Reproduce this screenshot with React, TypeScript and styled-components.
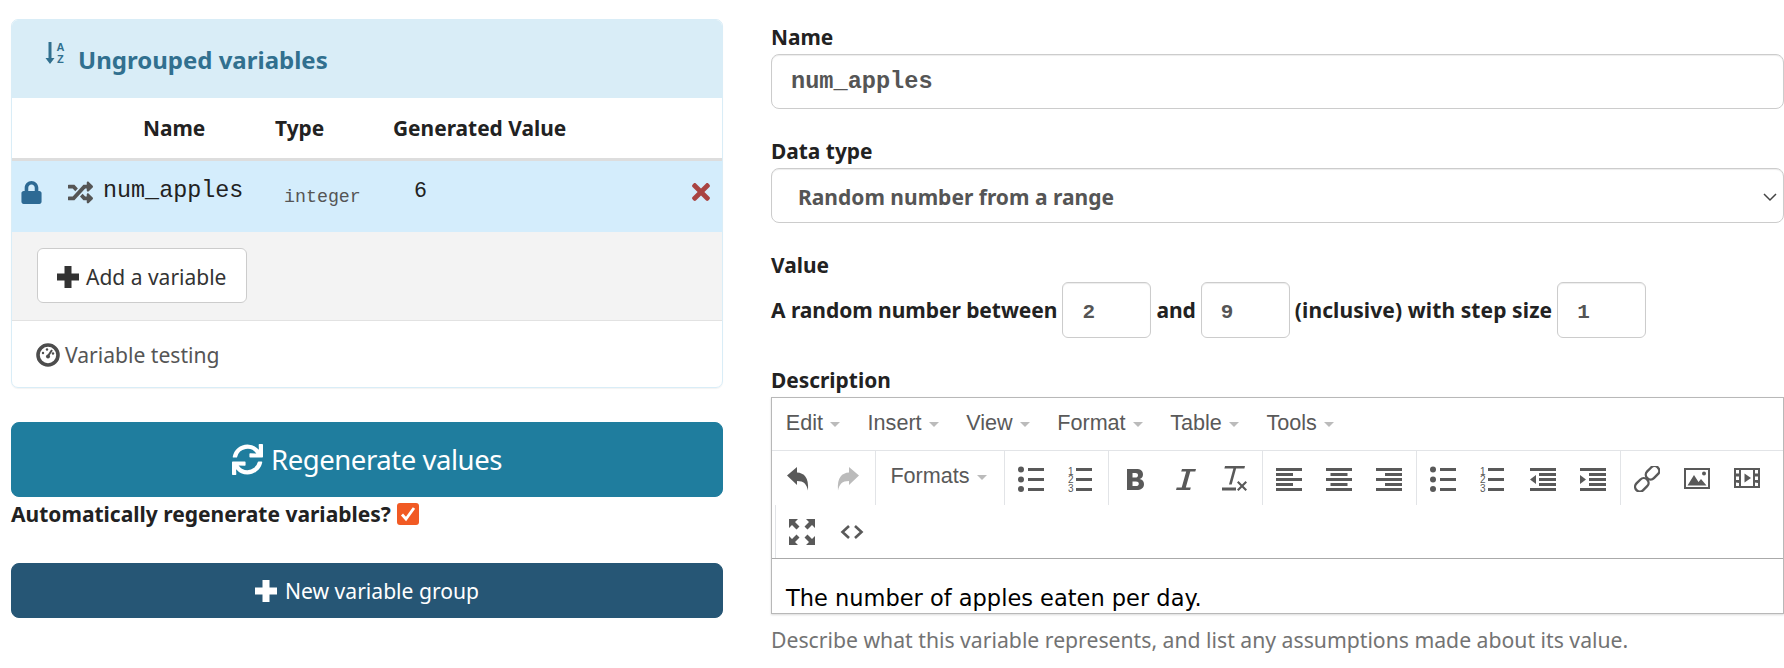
import React from "react";
import styled, { createGlobalStyle } from "styled-components";
import { FaLock, FaRandom, FaSync, FaTimes } from "react-icons/fa";

const sans = `"Noto Sans", "Open Sans", Arial, sans-serif`;
const mono = `"Liberation Mono", "Courier New", monospace`;
const tiny = `"Liberation Sans", Arial, sans-serif`;

const GlobalStyle = createGlobalStyle`
  html, body { margin: 0; padding: 0; background: #fff; overflow: hidden; }
  body { font-family: ${sans}; font-size: 21px; color: #222; }
  * { box-sizing: border-box; }
`;

const Page = styled.div`
  display: grid;
  grid-template-columns: 712px 1013px;
  column-gap: 48px;
  padding-left: 11px;
  width: 1784px;
  height: 668px;
  overflow: hidden;
`;

const LeftColumn = styled.div`
  display: flex;
  flex-direction: column;
  padding-top: 19px;
`;

const Panel = styled.div`
  border: 1px solid #d9edf7;
  border-radius: 7px;
  height: 369px;
  box-shadow: 0 1px 1px rgba(0, 0, 0, 0.05);
  overflow: hidden;
`;

const PanelHeader = styled.div`
  height: 78px;
  background: #d9edf7;
  color: #31708f;
  display: flex;
  align-items: center;
  padding-left: 33px;
  gap: 13px;
  font-weight: 700;
  font-size: 24px;
`;

const VarRow = styled.div<{ $head?: boolean }>`
  display: grid;
  grid-template-columns: 56px 207px 118px 1fr 44px;
  height: ${(p) => (p.$head ? "63px" : "71px")};
  background: ${(p) => (p.$head ? "#fff" : "#d4edfc")};
  border-bottom: ${(p) => (p.$head ? "3px solid #ddd" : "none")};
`;

const HeadCell = styled.div<{ $pad?: number }>`
  padding: 16px 0 0 ${(p) => p.$pad ?? 0}px;
  font-weight: 700;
  font-size: 20.9px;
  white-space: nowrap;
`;

const LockCell = styled.div`
  display: flex;
  align-items: center;
  padding: 0 0 9px 8px;
  color: #2d6a94;
  font-size: 23px;
`;

const RemoveCell = styled.div`
  display: flex;
  align-items: center;
  justify-content: center;
  padding: 0 0 9px 2px;
  color: #a94442;
  font-size: 26px;
`;

const NameCell = styled.div`
  display: flex;
  align-items: center;
  gap: 10px;
  font-family: ${mono};
  font-size: 23.4px;
  color: #222;
  padding-bottom: 11px;
  svg { color: #555; font-size: 25px; margin-top: 3px; }
`;

const TypeCell = styled.div`
  font-family: ${mono};
  font-size: 18.3px;
  color: #555;
  padding: 26px 0 0 9px;
`;

const ValueCell = styled.div`
  font-family: ${mono};
  font-size: 21.6px;
  color: #222;
  padding: 18px 0 0 21px;
`;

const PanelFooter = styled.div`
  height: 89px;
  background: #f3f3f3;
  border-bottom: 1px solid #e2e2e2;
  padding: 16px 25px;
`;

const AddButton = styled.button`
  display: flex;
  align-items: center;
  gap: 7px;
  width: 210px;
  height: 55px;
  padding: 2px 0 0 19px;
  background: #fff;
  border: 1px solid #ccc;
  border-radius: 6px;
  color: #333;
  font-family: ${sans};
  font-size: 21px;
`;

const TestingLink = styled.div`
  display: flex;
  align-items: center;
  gap: 5px;
  height: 65px;
  padding: 2px 0 0 24px;
  color: #555;
  font-size: 21.1px;
`;

const BigButton = styled.button<{ $bg: string; $large?: boolean }>`
  display: flex;
  align-items: center;
  justify-content: center;
  gap: 8px;
  width: 100%;
  height: ${(p) => (p.$large ? "75px" : "55px")};
  background: ${(p) => p.$bg};
  border: 1px solid ${(p) => p.$bg};
  border-radius: 8px;
  color: #fff;
  font-family: ${sans};
  font-size: ${(p) => (p.$large ? "27.5px" : "21.1px")};
  letter-spacing: ${(p) => (p.$large ? "-0.45px" : "0")};
`;

const RegenerateButton = styled(BigButton)`
  margin-top: 34px;
`;

const AutoRow = styled.div`
  display: flex;
  align-items: center;
  gap: 6px;
  height: 34px;
  font-weight: 700;
  font-size: 21px;
  white-space: nowrap;
`;

const CheckBox = styled.span`
  display: inline-flex;
  align-items: center;
  justify-content: center;
  width: 22px;
  height: 22px;
  background: #f15a24;
  border-radius: 3px;
`;

const NewGroupButton = styled(BigButton)`
  margin-top: 32px;
`;

const RightColumn = styled.div`
  padding-top: 24px;
`;

const Field = styled.div`
  margin-bottom: 29px;
`;

const Label = styled.div`
  height: 30px;
  line-height: 26px;
  font-weight: 700;
  font-size: 20.9px;
`;

const TextInput = styled.input`
  display: block;
  width: 100%;
  height: 55px;
  padding: 0 19px;
  border: 1px solid #ccc;
  border-radius: 8px;
  box-shadow: inset 0 1px 1px rgba(0, 0, 0, 0.075);
  color: #555;
  font-family: ${mono};
  font-weight: 700;
  font-size: 23.6px;
  outline: none;
`;

const SelectBox = styled.div`
  position: relative;
`;

const Select = styled.select`
  display: block;
  width: 100%;
  height: 55px;
  padding: 2px 26px 0;
  appearance: none;
  background: #fff;
  border: 1px solid #ccc;
  border-radius: 8px;
  box-shadow: inset 0 1px 1px rgba(0, 0, 0, 0.075);
  color: #555;
  font-family: ${sans};
  font-weight: 700;
  font-size: 21px;
`;

const Chevron = styled.svg`
  position: absolute;
  right: 7px;
  top: 25px;
  pointer-events: none;
`;

const RangeRow = styled.div`
  display: flex;
  align-items: center;
  gap: 5px;
  height: 56px;
  font-weight: 700;
  font-size: 21px;
  letter-spacing: -0.05px;
  white-space: nowrap;
`;

const RangeSuffix = styled.span`
  letter-spacing: 0.1px;
`;

const NumberInput = styled.input`
  width: 89px;
  height: 56px;
  padding: 4px 0 0 19px;
  border: 1px solid #ccc;
  border-radius: 6px;
  box-shadow: inset 0 1px 1px rgba(0, 0, 0, 0.075);
  color: #555;
  font-family: ${mono};
  font-weight: 700;
  font-size: 21px;
  outline: none;
`;

const Editor = styled.div`
  height: 217px;
  border: 1px solid #b8b8b8;
  box-shadow: 0 1px 2px rgba(0, 0, 0, 0.15);
  overflow: hidden;
`;

const MenuBar = styled.div`
  display: flex;
  align-items: center;
  height: 53px;
  padding: 0 0 2px 0;
  border-bottom: 1px solid #e2e4e7;
`;

const MenuItem = styled.div`
  display: flex;
  align-items: center;
  gap: 7px;
  padding: 0 13.8px;
  color: #595959;
  font-family: ${tiny};
  font-size: 21.6px;
`;

const Caret = styled.span`
  width: 0;
  height: 0;
  margin-top: 3px;
  border-left: 5.5px solid transparent;
  border-right: 5.5px solid transparent;
  border-top: 5.5px solid #bbb;
`;

const ToolRow = styled.div<{ $inset?: boolean }>`
  display: flex;
  height: 54px;
  padding-left: ${(p) => (p.$inset ? "3px" : "0")};
  border-bottom: ${(p) => (p.$inset ? "1px solid #aaa" : "none")};
`;

const ToolGroup = styled.div<{ $first?: boolean }>`
  display: flex;
  align-items: center;
  padding: 1px 2px 0 1px;
  border-left: ${(p) => (p.$first ? "none" : "1px solid #e2e4e7")};
`;

const ToolButton = styled.div`
  display: flex;
  align-items: center;
  justify-content: center;
  width: 50px;
`;

const FormatsButton = styled.div`
  display: flex;
  align-items: center;
  justify-content: center;
  gap: 7px;
  width: 125px;
  padding: 0 2px 5px 0;
  color: #595959;
  font-family: ${tiny};
  font-size: 21.6px;
`;

const EditorBody = styled.div`
  padding: 24px 14px;
  font-family: "DejaVu Sans", Verdana, sans-serif;
  font-size: 22.5px;
  line-height: 30px;
  color: #000;
`;

const HelpText = styled.div`
  margin-top: 11px;
  color: #737373;
  font-size: 21.2px;
  white-space: nowrap;
`;

const Svg = styled.svg`
  display: block;
  flex: none;
`;

const Icon = ({ children, w = 26, h = 26 }: { children: React.ReactNode; w?: number; h?: number }) => (
  <Svg width={w} height={h} viewBox={`0 0 ${w} ${h}`} fill="#595959">
    {children}
  </Svg>
);

const SortIcon = () => (
  <Svg width={20} height={24} viewBox="0 0 20 24" fill="#31708f" style={{ marginTop: -12 }}>
    <path d="M3.5 1h3v16h3L5 23 .5 17h3z" />
    <text x="11.500" y="10" fontFamily={tiny} fontWeight="700" fontSize="11">A</text>
    <text x="12" y="21.500" fontFamily={tiny} fontWeight="700" fontSize="11">Z</text>
  </Svg>
);

const PlusIcon = ({ color, size }: { color: string; size: number }) => (
  <Svg width={size} height={size} viewBox="0 0 22 22" fill={color}>
    <path d="M7.5 0h7v7.5H22v7h-7.5V22h-7v-7.5H0v-7h7.5z" />
  </Svg>
);

const GaugeIcon = () => (
  <Svg width={24} height={24} viewBox="0 0 24 24">
    <circle cx="12" cy="12" r="10" fill="#fff" stroke="#4d4d4d" strokeWidth="3.6" />
    <path d="M12 13l4-6" stroke="#4d4d4d" strokeWidth="2" />
    <circle cx="12" cy="13.500" r="2" fill="#4d4d4d" />
    <circle cx="7" cy="10" r="1.200" fill="#4d4d4d" />
    <circle cx="11" cy="6.500" r="1.200" fill="#4d4d4d" />
    <circle cx="17" cy="10.500" r="1.200" fill="#4d4d4d" />
  </Svg>
);

const UndoIcon = ({ muted, flip }: { muted?: boolean; flip?: boolean }) => (
  <Svg width={26} height={26} viewBox="0 0 26 26" fill={muted ? "#bbb" : "#595959"}
    style={flip ? { transform: "scaleX(-1)" } : undefined}>
    <path d="M2 9.500 12 1v5.500c7 .5 12 4.500 11 18-1.500-6.500-4-9.500-11-9.500v4z" />
  </Svg>
);

const Lines = ({ rows }: { rows: [number, number, number][] }) => (
  <>
    {rows.map(([x, y, w]) => (
      <rect key={`${x}-${y}`} x={x} y={y} width={w} height={3} />
    ))}
  </>
);

const BulletIcon = () => (
  <Icon>
    <circle cx="3" cy="3.500" r="3" />
    <circle cx="3" cy="13.500" r="3" />
    <circle cx="3" cy="23" r="3" />
    <Lines rows={[[10, 2, 16], [10, 12, 16], [10, 22, 16]]} />
  </Icon>
);

const NumberIcon = () => (
  <Icon>
    <text x="0" y="8.500" fontFamily={tiny} fontSize="10">1</text>
    <text x="0" y="17" fontFamily={tiny} fontSize="10">2</text>
    <text x="0" y="25.500" fontFamily={tiny} fontSize="10">3</text>
    <Lines rows={[[8, 2, 16], [8, 12, 16], [8, 22, 16]]} />
  </Icon>
);

const AlignIcon = ({ offset }: { offset: number }) => (
  <Icon>
    <Lines rows={[[0, 2, 26], [offset, 7, 17], [0, 12, 26], [offset, 17, 17], [0, 22, 26]]} />
  </Icon>
);

const IndentIcon = ({ out }: { out?: boolean }) => (
  <Icon>
    <Lines rows={[[0, 2, 26], [9, 7, 17], [9, 12, 17], [9, 17, 17], [0, 22, 26]]} />
    <path d={out ? "M6 9v9l-6-4.500z" : "M0 9v9l6-4.500z"} />
  </Icon>
);

const BoldIcon = () => (
  <Icon>
    <path fillRule="evenodd" d="M5 3h9c5 0 7 2 7 5.500 0 2.500-1.500 4-3.500 4.500 2.500.5 4.500 2 4.500 5 0 4-3 6-7.500 6H5zm5.500 4v4.500h3c1.500 0 2.500-.8 2.500-2.300S15 7 13.500 7zm0 8.500V20h3.500c1.700 0 2.800-.8 2.800-2.300s-1.100-2.200-2.800-2.200z" />
  </Icon>
);

const ItalicIcon = () => (
  <Icon>
    <path d="M10 3h14l-.7 2.500h-5l-4.500 16h5l-.7 2.500H4l.7-2.500h5l4.500-16h-5z" />
  </Icon>
);

const ClearIcon = () => (
  <Icon>
    <path d="M3 0h20l-.6 2.500h-8.300l-4.400 16H7l4.400-16H2.400z" />
    <rect x="0" y="21.500" width="14" height="3" />
    <path d="M16.500 15l3.500 3.500 3.500-3.500 1.500 1.500-3.500 3.500 3.500 3.500-1.500 1.500-3.500-3.500-3.500 3.500-1.500-1.500 3.500-3.500-3.500-3.500z" />
  </Icon>
);

const LinkIcon = () => (
  <Icon>
    <g fill="none" stroke="#595959" strokeWidth="2.400">
      <rect x="13.500" y="-1" width="9.500" height="15" rx="4.700" transform="rotate(45 18 7)" />
      <rect x="3" y="11.500" width="9.500" height="15" rx="4.700" transform="rotate(45 8 19)" />
    </g>
  </Icon>
);

const ImageIcon = () => (
  <Icon>
    <path fillRule="evenodd" d="M0 2h26v21H0zm2 2v17h22V4z" />
    <path d="M3.500 19.500 10 9l4.500 7 2.500-3 5.500 6.500z" />
    <circle cx="20" cy="7.500" r="2" />
  </Icon>
);

const MediaIcon = () => (
  <Icon>
    <path fillRule="evenodd" d="M0 2h26v20H0zm2 2v3.500h3V4zm0 6.500v3.500h3v-3.500zm0 6v3.500h3V17zM21 4v3.500h3V4zm0 6.500v3.500h3v-3.500zm0 6v3.500h3V17zM7 4v16h12V4z" />
    <path d="M10.500 7.500 17 12l-6.500 4.500z" />
  </Icon>
);

const FullscreenIcon = () => (
  <Icon>
    <path d="M0 0h9l-3 3 4.500 4.500-3 3L3 6 0 9zM26 0v9l-3-3-4.500 4.500-3-3L20 3l-3-3zM0 26v-9l3 3 4.500-4.500 3 3L6 23l3 3zM26 26h-9l3-3-4.500-4.500 3-3L23 20l3-3z" />
  </Icon>
);

const CodeIcon = () => (
  <Svg width={24} height={16} viewBox="0 0 24 16" fill="none" stroke="#595959" strokeWidth="2.600">
    <path d="M9 2 2.500 8 9 14M15 2l6.500 6-6.500 6" />
  </Svg>
);

const MENU_ITEMS = ["Edit", "Insert", "View", "Format", "Table", "Tools"];

export default function App() {
  return (
    <>
      <GlobalStyle />
      <Page>
        <LeftColumn>
          <Panel>
            <PanelHeader>
              <SortIcon />
              Ungrouped variables
            </PanelHeader>
            <VarRow $head>
              <div />
              <HeadCell $pad={75}>Name</HeadCell>
              <HeadCell>Type</HeadCell>
              <HeadCell>Generated Value</HeadCell>
              <div />
            </VarRow>
            <VarRow>
              <LockCell><FaLock /></LockCell>
              <NameCell><FaRandom />num_apples</NameCell>
              <TypeCell>integer</TypeCell>
              <ValueCell>6</ValueCell>
              <RemoveCell><FaTimes /></RemoveCell>
            </VarRow>
            <PanelFooter>
              <AddButton>
                <PlusIcon color="#333" size={22} />
                Add a variable
              </AddButton>
            </PanelFooter>
            <TestingLink>
              <GaugeIcon />
              Variable testing
            </TestingLink>
          </Panel>
          <RegenerateButton $bg="#1f7d9e" $large>
            <FaSync size={31} />
            Regenerate values
          </RegenerateButton>
          <AutoRow>
            Automatically regenerate variables?
            <CheckBox>
              <svg width="16" height="16" viewBox="0 0 16 16" fill="none" stroke="#fff" strokeWidth="2.800">
                <path d="M2 8.500 6 13l8-11" />
              </svg>
            </CheckBox>
          </AutoRow>
          <NewGroupButton $bg="#265675">
            <PlusIcon color="#fff" size={22} />
            New variable group
          </NewGroupButton>
        </LeftColumn>

        <RightColumn>
          <Field>
            <Label>Name</Label>
            <TextInput readOnly value="num_apples" />
          </Field>
          <Field>
            <Label>Data type</Label>
            <SelectBox>
              <Select defaultValue="range">
                <option value="range">Random number from a range</option>
              </Select>
              <Chevron width="14" height="9" viewBox="0 0 14 9" fill="none" stroke="#444" strokeWidth="1.500">
                <path d="M1 1l6 6 6-6" />
              </Chevron>
            </SelectBox>
          </Field>
          <Field>
            <Label>Value</Label>
            <RangeRow>
              A random number between
              <NumberInput readOnly value="2" />
              and
              <NumberInput readOnly value="9" />
              <RangeSuffix>(inclusive) with step size</RangeSuffix>
              <NumberInput readOnly value="1" />
            </RangeRow>
          </Field>
          <Label>Description</Label>
          <Editor>
            <MenuBar>
              {MENU_ITEMS.map((item) => (
                <MenuItem key={item}>
                  {item}
                  <Caret />
                </MenuItem>
              ))}
            </MenuBar>
            <ToolRow>
              <ToolGroup $first>
                <ToolButton><UndoIcon /></ToolButton>
                <ToolButton><UndoIcon muted flip /></ToolButton>
              </ToolGroup>
              <ToolGroup>
                <FormatsButton>Formats<Caret /></FormatsButton>
              </ToolGroup>
              <ToolGroup>
                <ToolButton><BulletIcon /></ToolButton>
                <ToolButton><NumberIcon /></ToolButton>
              </ToolGroup>
              <ToolGroup>
                <ToolButton><BoldIcon /></ToolButton>
                <ToolButton><ItalicIcon /></ToolButton>
                <ToolButton><ClearIcon /></ToolButton>
              </ToolGroup>
              <ToolGroup>
                <ToolButton><AlignIcon offset={0} /></ToolButton>
                <ToolButton><AlignIcon offset={4.5} /></ToolButton>
                <ToolButton><AlignIcon offset={9} /></ToolButton>
              </ToolGroup>
              <ToolGroup>
                <ToolButton><BulletIcon /></ToolButton>
                <ToolButton><NumberIcon /></ToolButton>
                <ToolButton><IndentIcon out /></ToolButton>
                <ToolButton><IndentIcon /></ToolButton>
              </ToolGroup>
              <ToolGroup>
                <ToolButton><LinkIcon /></ToolButton>
                <ToolButton><ImageIcon /></ToolButton>
                <ToolButton><MediaIcon /></ToolButton>
              </ToolGroup>
            </ToolRow>
            <ToolRow $inset>
              <ToolGroup>
                <ToolButton><FullscreenIcon /></ToolButton>
                <ToolButton><CodeIcon /></ToolButton>
              </ToolGroup>
            </ToolRow>
            <EditorBody>The number of apples eaten per day.</EditorBody>
          </Editor>
          <HelpText>Describe what this variable represents, and list any assumptions made about its value.</HelpText>
        </RightColumn>
      </Page>
    </>
  );
}
